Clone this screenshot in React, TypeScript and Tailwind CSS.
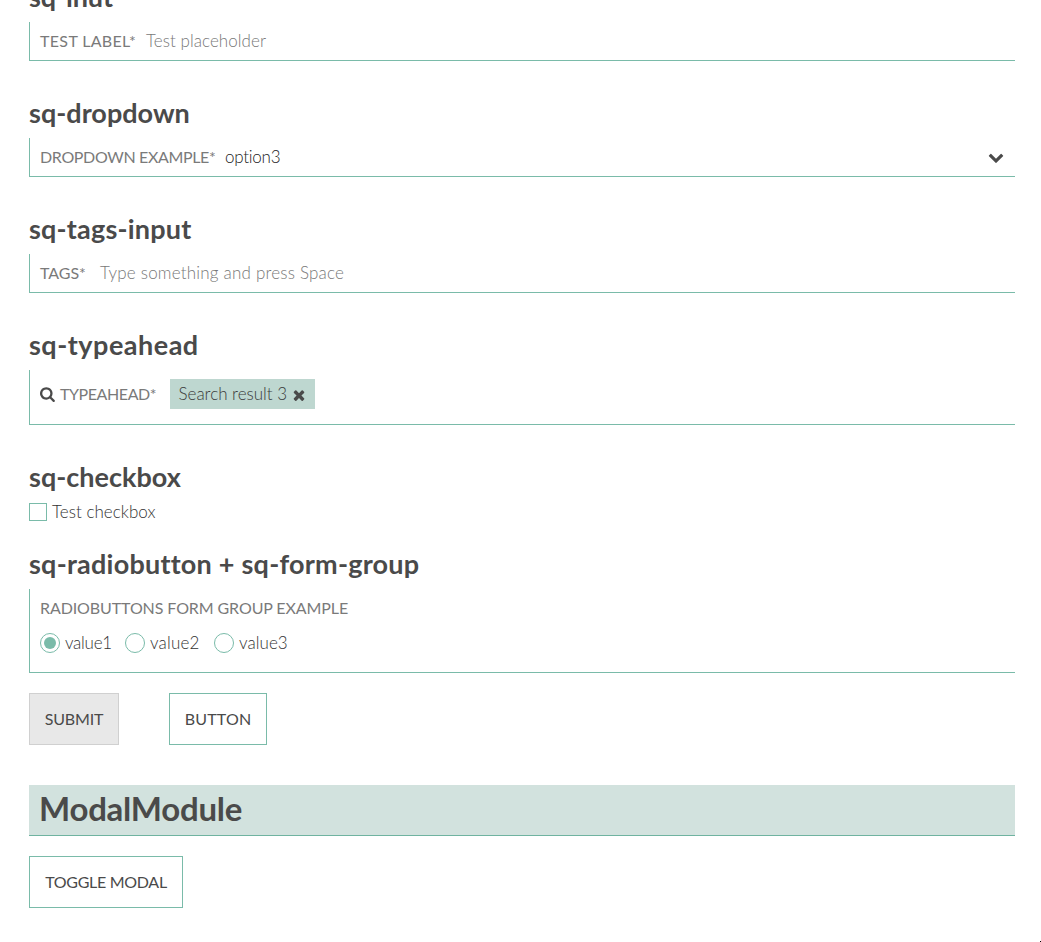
import type { ReactNode } from "react";

function Heading({ children, className }: { children: ReactNode; className: string }) {
  return <h2 className={`mb-[9px] h-8 text-[27px] leading-8 font-bold whitespace-nowrap ${className}`}>{children}</h2>;
}

function Field({ children, className }: { children: ReactNode; className: string }) {
  return <div className={`border-b border-[#7abba9] ${className}`}>{children}</div>;
}

function Icon({ d, className }: { d: string; className: string }) {
  return (
    <svg viewBox="0 0 1792 1792" className={`size-4 shrink-0 fill-[#4a4a4a] ${className}`} aria-hidden="true">
      <path d={d} />
    </svg>
  );
}

const SEARCH =
  "M1152 832q0-185-131.5-316.5t-316.5-131.5-316.5 131.5-131.5 316.5 131.5 316.5 316.5 131.5 316.5-131.5 131.5-316.5zm512 832q0 52-38 90t-90 38q-54 0-90-38l-343-342q-179 124-399 124-143 0-273.5-55.5t-225-150-150-225-55.5-273.5 55.5-273.5 150-225 225-150 273.5-55.5 273.5 55.5 225 150 150 225 55.5 273.5q0 220-124 399l343 343q37 37 37 90z";
const CHEVRON =
  "M1683 808l-742 741q-19 19-45 19t-45-19l-742-741q-19-19-19-45.5t19-45.5l166-165q19-19 45-19t45 19l531 531 531-531q19-19 45-19t45 19l166 165q19 19 19 45.5t-19 45.5z";
const TIMES =
  "M1490 1322q0 40-28 68l-136 136q-28 28-68 28t-68-28l-294-294-294 294q-28 28-68 28t-68-28l-136-136q-28-28-28-68t28-68l294-294-294-294q-28-28-28-68t28-68l136-136q28-28 68-28t68 28l294 294 294-294q28-28 68-28t68 28l136 136q28 28 28 68t-28 68l-294 294 294 294q28 28 28 68z";

function Radio({ label, checked, className }: { label: string; checked?: boolean; className: string }) {
  return (
    <label className={`flex h-5 items-center gap-[5px] text-[17px] font-light text-[#333] ${className}`}>
      <span className="flex size-5 shrink-0 items-center justify-center rounded-full border border-[#7abba9]">
        {checked && <span className="size-3 rounded-full bg-[#7abba9]" />}
      </span>
      {label}
    </label>
  );
}

export default function App() {
  return (
    <div className="relative h-[942px] overflow-hidden bg-white pr-[26px] pl-[29px] font-['Lato',sans-serif] text-base leading-6 whitespace-nowrap text-[#4a4a4a]">
      <main className="-mt-[90px] flex flex-col pt-[35px]">
        <Heading className="mt-9 tracking-[-0.1px]">sq-inut</Heading>
        <Field className="h-[39px]">
          <div className="flex h-[38px] items-center border-l border-[#7abba9] pl-2.5">
            <span className="w-[106px] tracking-[0.34px] text-[#7a7a7a]">TEST LABEL*</span>
            <span className="text-[17px] font-light tracking-[0.05px] text-[#787878]">Test placeholder</span>
          </div>
        </Field>

        <Heading className="mt-9 tracking-[0.02px]">sq-dropdown</Heading>
        <Field className="h-[39px]">
          <div className="flex h-[38px] items-center border-l border-[#7abba9] pr-[11px] pl-2.5">
            <span className="w-[185px] tracking-[-0.35px] text-[#7a7a7a]">DROPDOWN EXAMPLE*</span>
            <span className="grow text-[17px] font-light tracking-[-0.25px] text-[#222]">option3</span>
            <Icon d={CHEVRON} className="" />
          </div>
        </Field>

        <Heading className="mt-9 tracking-[0.2px]">sq-tags-input</Heading>
        <Field className="h-[39px]">
          <div className="flex h-[38px] items-center border-l border-[#7abba9] pl-2.5">
            <span className="w-[60px] tracking-[-0.05px] text-[#7a7a7a]">TAGS*</span>
            <span className="text-[17px] font-light tracking-[0.2px] text-[#787878]">Type something and press Space</span>
          </div>
        </Field>

        <Heading className="mt-9 tracking-[0.5px]">sq-typeahead</Heading>
        <Field className="h-[55px]">
          <div className="flex h-[54px] items-start border-l border-[#7abba9] pt-[9px] pl-2.5">
            <Icon d={SEARCH} className="mt-[7px]" />
            <span className="mt-[3px] ml-1 w-[110px] tracking-[-0.42px] text-[#7a7a7a]">TYPEAHEAD*</span>
            <span className="flex h-[30px] w-[145px] items-center bg-[#bed7d0] pl-[8.5px] text-[17px] font-light text-[#3a3a3a]">
              <span className="w-[112.5px]">Search result 3</span>
              <Icon d={TIMES} className="mt-px" />
            </span>
          </div>
        </Field>

        <Heading className="mt-9 tracking-[0.01px]">sq-checkbox</Heading>
        <label className="flex h-5 items-center">
          <span className="mr-[5px] size-[18px] border border-[#7abba9]" />
          <span className="text-[17px] font-light tracking-[0.03px] text-[#333]">Test checkbox</span>
        </label>

        <Heading className="mt-[26px] tracking-[0.23px]">sq-radiobutton + sq-form-group</Heading>
        <Field className="h-[84px]">
          <div className="h-[83px] border-l border-[#7abba9] pt-[7px] pl-2.5">
            <div className="tracking-[-0.1px] text-[#7a7a7a]">RADIOBUTTONS FORM GROUP EXAMPLE</div>
            <div className="mt-[13px] flex">
              <Radio label="value1" checked className="w-[85px] tracking-[-0.25px]" />
              <Radio label="value2" className="w-[89px] tracking-[0.2px]" />
              <Radio label="value3" className="w-[80px] tracking-[0.05px]" />
            </div>
          </div>
        </Field>

        <div className="mt-5 flex gap-[50px]">
          <button className="h-[52px] w-[90px] border border-[#d0d0d0] bg-[#e8e8e8] tracking-[-0.2px]">SUBMIT</button>
          <button className="h-[52px] w-[98px] border border-[#7abba9] tracking-[0.2px]">BUTTON</button>
        </div>

        <h1 className="mt-10 h-[51px] border-b border-[#6fb3a0] bg-[#d2e2de] pl-2.5 text-[33px] leading-[47px] font-bold tracking-[-0.25px]">
          ModalModule
        </h1>
        <button className="mt-5 h-[52px] w-[154px] border border-[#7abba9] tracking-[-0.3px]">TOGGLE MODAL</button>
      </main>
      <span className="absolute right-0 bottom-0 size-px bg-black" />
    </div>
  );
}
